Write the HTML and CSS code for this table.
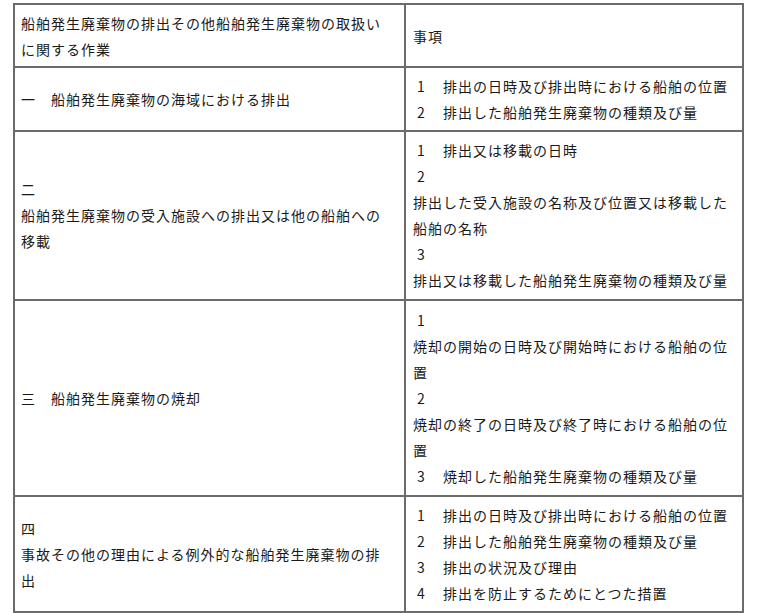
FILE: index.html
```html
<!DOCTYPE html>
<html lang="ja">
<head>
<meta charset="utf-8">
<title>船舶発生廃棄物の排出その他船舶発生廃棄物の取扱いに関する作業</title>
<link rel="stylesheet" href="styles.css">
</head>
<body>
<table class="tbl">
  <colgroup><col class="c1"><col class="c2"></colgroup>
  <tbody>
    <tr class="r0">
      <td class="l">船舶発生廃棄物の排出その他船舶発生廃棄物の取扱いに関する作業</td>
      <td class="r">事項</td>
    </tr>
    <tr class="r1">
      <td class="l">一　<span class="t">船舶発生廃棄物の海域における排出</span></td>
      <td class="r">
        <div><span class="n">1</span>　<span class="t">排出の日時及び排出時における船舶の位置</span></div>
        <div><span class="n">2</span>　<span class="t">排出した船舶発生廃棄物の種類及び量</span></div>
      </td>
    </tr>
    <tr class="r2">
      <td class="l">二　<span class="t">船舶発生廃棄物の受入施設への排出又は他の船舶への移載</span></td>
      <td class="r">
        <div><span class="n">1</span>　<span class="t">排出又は移載の日時</span></div>
        <div><span class="n">2</span>　<span class="t">排出した受入施設の名称及び位置又は移載した船舶の名称</span></div>
        <div><span class="n">3</span>　<span class="t">排出又は移載した船舶発生廃棄物の種類及び量</span></div>
      </td>
    </tr>
    <tr class="r3">
      <td class="l">三　<span class="t">船舶発生廃棄物の焼却</span></td>
      <td class="r">
        <div><span class="n">1</span>　<span class="t">焼却の開始の日時及び開始時における船舶の位置</span></div>
        <div><span class="n">2</span>　<span class="t">焼却の終了の日時及び終了時における船舶の位置</span></div>
        <div><span class="n">3</span>　<span class="t">焼却した船舶発生廃棄物の種類及び量</span></div>
      </td>
    </tr>
    <tr class="r4">
      <td class="l">四　<span class="t">事故その他の理由による例外的な船舶発生廃棄物の排出</span></td>
      <td class="r">
        <div><span class="n">1</span>　<span class="t">排出の日時及び排出時における船舶の位置</span></div>
        <div><span class="n">2</span>　<span class="t">排出した船舶発生廃棄物の種類及び量</span></div>
        <div><span class="n">3</span>　<span class="t">排出の状況及び理由</span></div>
        <div><span class="n">4</span>　<span class="t">排出を防止するためにとつた措置</span></div>
      </td>
    </tr>
  </tbody>
</table>
</body>
</html>
```

FILE: styles.css
```css
html, body {
  margin: 0;
  padding: 0;
  background: #ffffff;
}

body {
  padding: 3px 0 0 13px;
  font-family: "Noto Sans CJK JP", "Noto Sans", sans-serif;
  font-size: 14px;
  letter-spacing: 1px;
  line-height: 26px;
  color: #1a1a1a;
}

.tbl {
  border-collapse: separate;
  border-spacing: 0;
  table-layout: fixed;
  width: 731px;
  border-left: 2px solid #6b6b6b;
  border-top: 2px solid #6b6b6b;
}

.c1 { width: 391px; }
.c2 { width: 338px; }

.tbl td {
  border-right: 2px solid #6b6b6b;
  border-bottom: 2px solid #6b6b6b;
  vertical-align: middle;
  padding: 5px 5px 5px 7px;
}

.tbl td.l {
  padding-left: 6px;
  padding-right: 12px;
}

.r0 td { padding-bottom: 4px; }
.r2 td { padding-bottom: 6px; }
.r3 td { padding-top: 6px; padding-bottom: 6px; }

.t {
  display: inline-block;
}

.n {
  display: inline-block;
  box-sizing: border-box;
  width: 15px;
  padding-left: 4px;
}
```
